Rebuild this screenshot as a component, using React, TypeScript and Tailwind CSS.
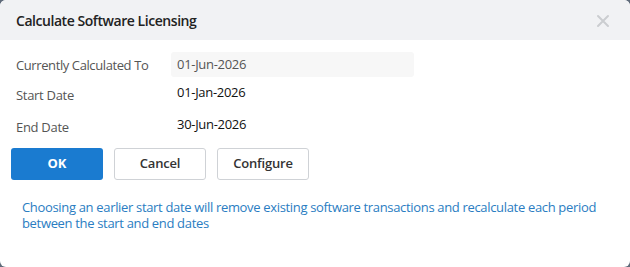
import React from "react";

export default function App() {
  const font = { fontFamily: '"Open Sans", "Noto Sans", sans-serif' };
  return (
    <div className="w-[630px] h-[267px] bg-[#5f6b7a] overflow-hidden" style={font}>
      <div className="w-[630px] h-[267px] bg-white rounded-[6px] overflow-hidden flex flex-col">
        <div className="h-[40px] bg-[#f1f2f4] flex items-center justify-between pl-[16px] pr-[20px] shrink-0">
          <span className="text-[14px] font-semibold text-[#222] tracking-[-0.45px]">Calculate Software Licensing</span>
          <svg width="14" height="14" viewBox="0 0 14 14" className="mt-[1px]">
            <path d="M2 2 L12 12 M12 2 L2 12" stroke="#cbcdd0" strokeWidth="2" strokeLinecap="round" />
          </svg>
        </div>
        <div className="flex flex-col pt-[12px] pl-[16px]">
          <div className="flex items-center h-[25px]">
            <span className="w-[155px] text-[13px] text-[#555] tracking-[-0.4px] pt-[3px]">Currently Calculated To</span>
            <div className="w-[243px] h-[25px] bg-[#f7f7f7] rounded-[3px] flex items-center pl-[6px]">
              <span className="text-[13px] text-[#555] tracking-[-0.3px]">01-Jun-2026</span>
            </div>
          </div>
          <div className="flex items-start h-[32px] mt-[4px]">
            <span className="w-[161px] text-[13px] text-[#555] tracking-[-0.3px] pt-[5px]">Start Date</span>
            <span className="text-[13px] text-[#111] tracking-[-0.3px] pt-[2px]">01-Jan-2026</span>
          </div>
          <div className="flex items-start h-[32px]">
            <span className="w-[161px] text-[13px] text-[#555] tracking-[-0.3px] pt-[5px]">End Date</span>
            <span className="text-[13px] text-[#111] tracking-[-0.3px] pt-[2px]">30-Jun-2026</span>
          </div>
        </div>
        <div className="flex gap-[11px] pl-[11px] mt-[3px]">
          <button className="w-[92px] h-[32px] rounded-[3px] bg-[#1a7bd0] text-white text-[13px] font-bold">OK</button>
          <button className="w-[92px] h-[32px] rounded-[3px] bg-white border border-[#cfd2d6] text-[#333] text-[13px] font-semibold tracking-[-0.2px]">Cancel</button>
          <button className="w-[92px] h-[32px] rounded-[3px] bg-white border border-[#cfd2d6] text-[#333] text-[13px] font-semibold tracking-[-0.2px]">Configure</button>
        </div>
        <p className="pl-[22px] pr-[20px] mt-[19px] text-[13px] leading-[16px] text-[#2a7dc2] tracking-[-0.33px]">
          Choosing an earlier start date will remove existing software transactions and recalculate each period between the start and end dates
        </p>
      </div>
    </div>
  );
}
